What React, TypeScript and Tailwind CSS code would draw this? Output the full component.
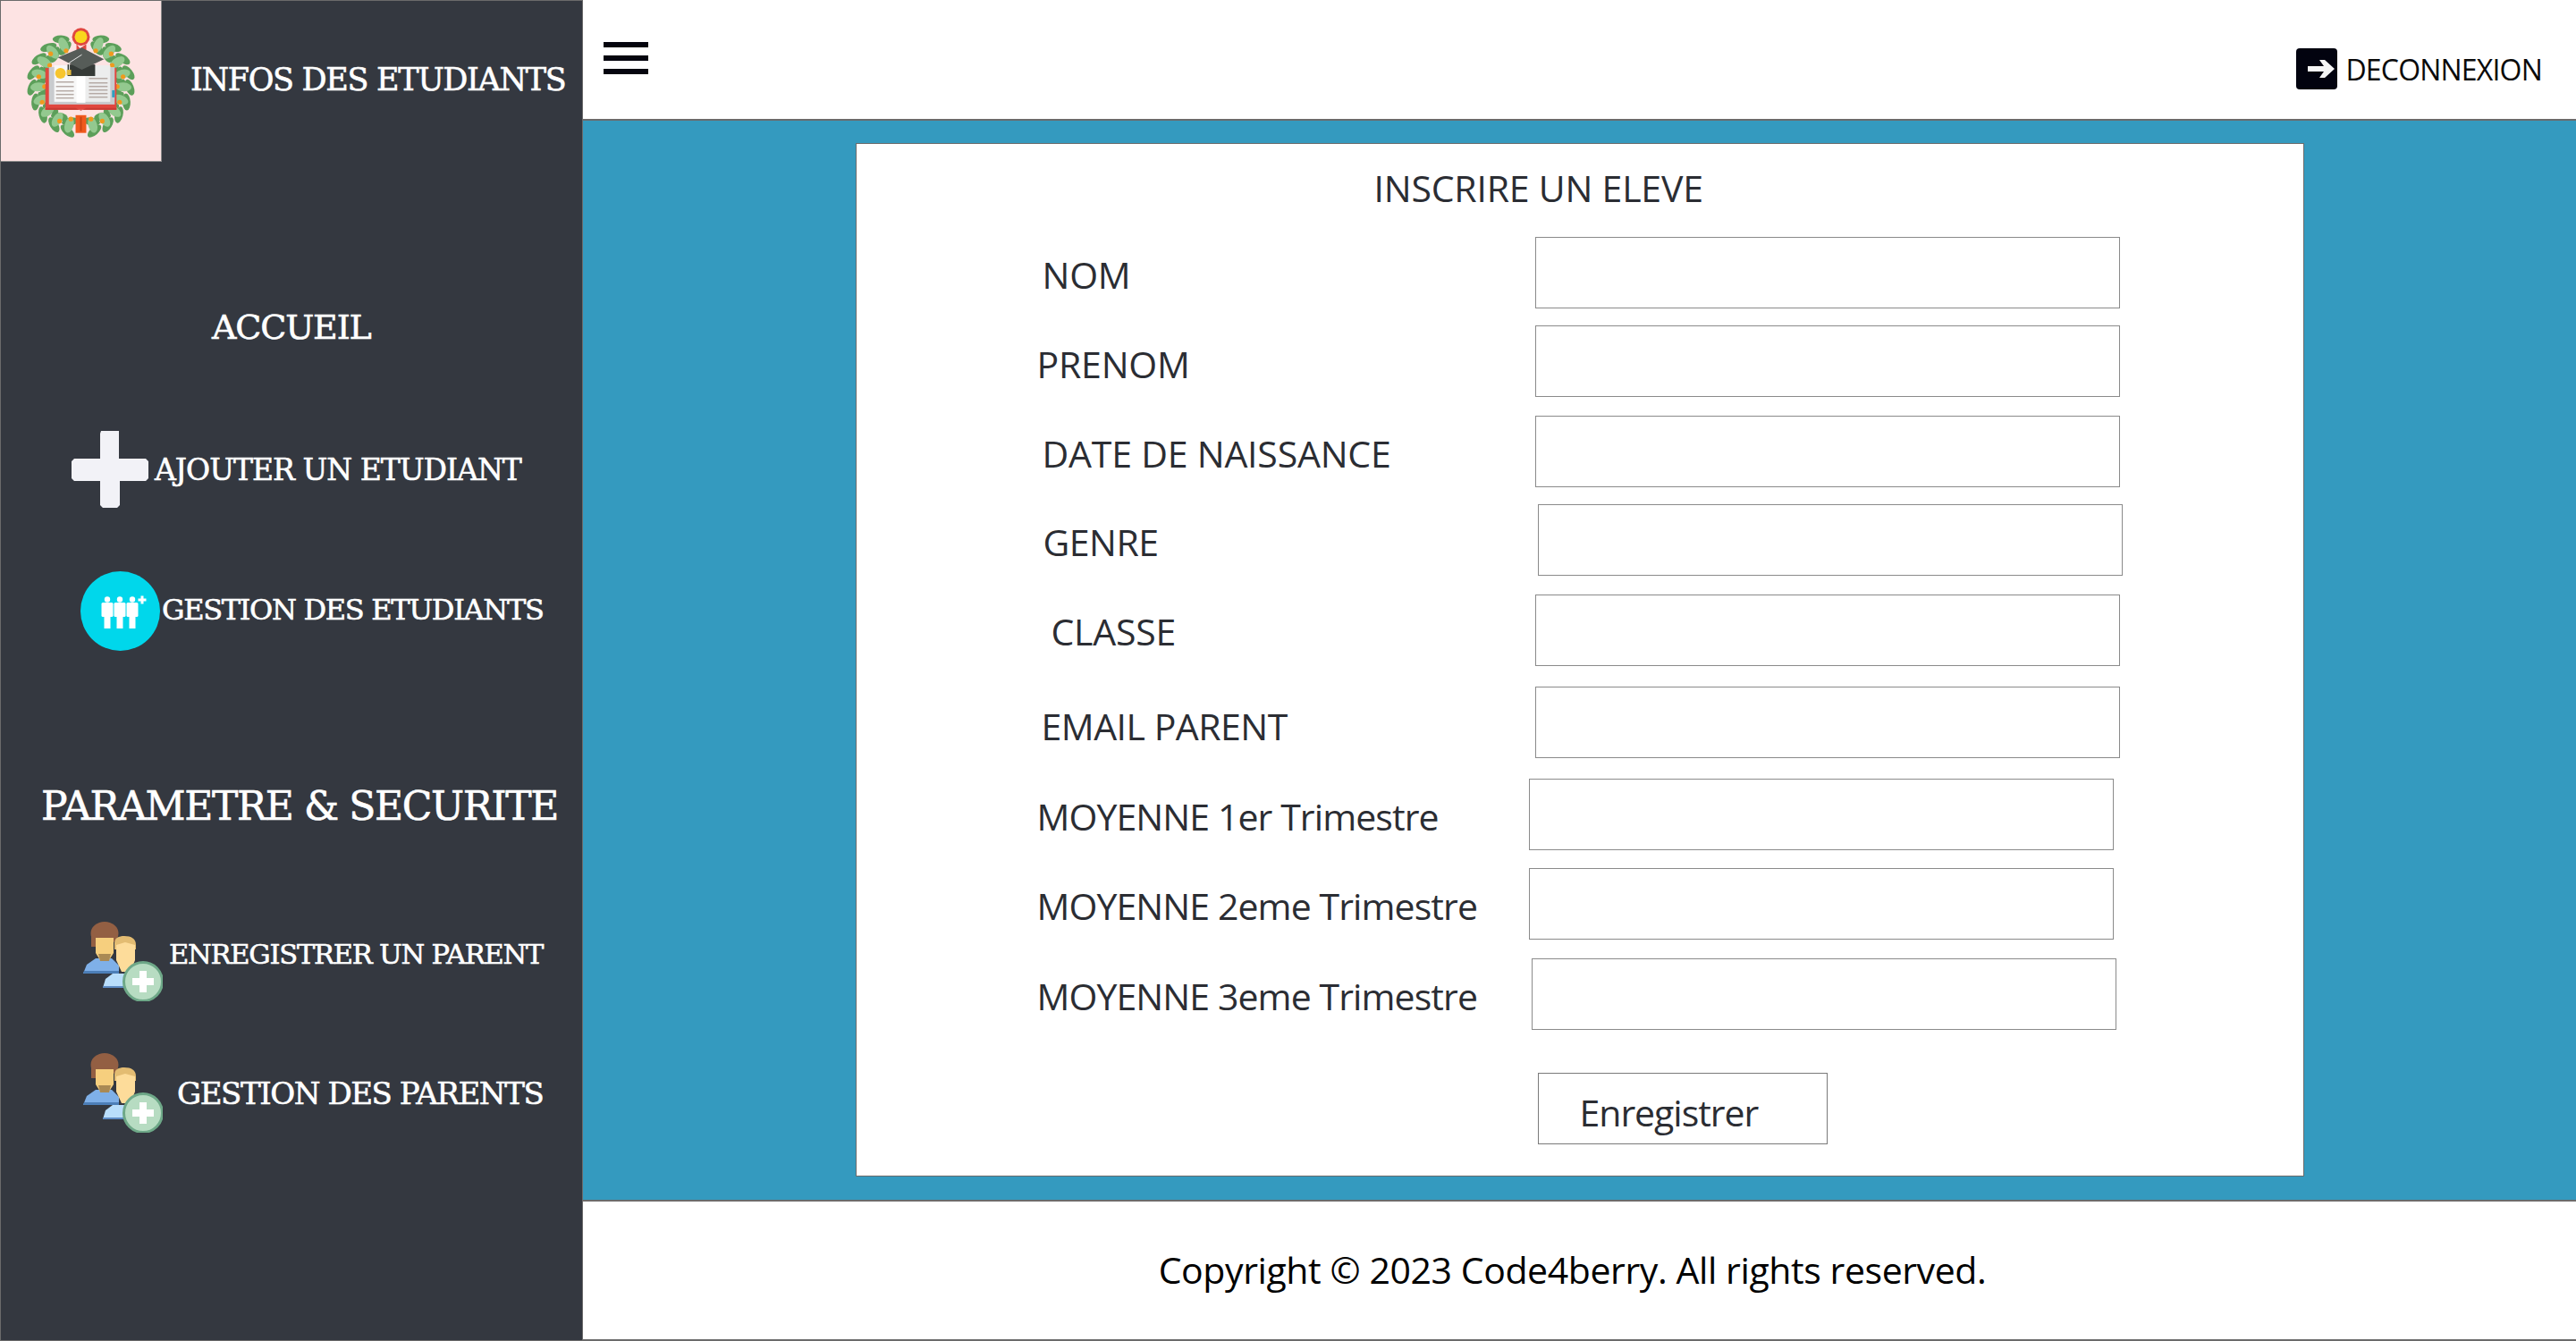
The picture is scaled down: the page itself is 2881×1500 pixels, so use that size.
const slab = "font-['DejaVu_Serif',serif] text-white whitespace-nowrap [-webkit-text-stroke:0.6px_#ffffff]"
const body = "font-['Open_Sans','Noto_Sans',sans-serif] whitespace-nowrap"

const fields = [
  { label: 'NOM', row: 'mt-0', left: 'pl-[208px]', labelW: 'w-[551px]', labelText: 'pt-[3px] tracking-[-0.005em]' },
  { label: 'PRENOM', row: 'mt-[19px]', left: 'pl-[202px]', labelW: 'w-[557px]', labelText: 'pt-[5px] tracking-[-0.005em]' },
  { label: 'DATE DE NAISSANCE', row: 'mt-[21px]', left: 'pl-[208px]', labelW: 'w-[551px]', labelText: 'pt-[4px] tracking-[-0.005em]' },
  { label: 'GENRE', row: 'mt-[19px]', left: 'pl-[209px]', labelW: 'w-[553px]', labelText: 'pt-[4px] tracking-[-0.012em]' },
  { label: 'CLASSE', row: 'mt-[21px]', left: 'pl-[218px]', labelW: 'w-[541px]', labelText: 'pt-[2px] tracking-[-0.005em]' },
  { label: 'EMAIL PARENT', row: 'mt-[23px]', left: 'pl-[207px]', labelW: 'w-[552px]', labelText: 'pt-[7px] tracking-[-0.012em]' },
  { label: 'MOYENNE 1er Trimestre', row: 'mt-[23px]', left: 'pl-[202px]', labelW: 'w-[550px]', labelText: 'pt-[4px] tracking-[-0.022em]' },
  { label: 'MOYENNE 2eme Trimestre', row: 'mt-[20px]', left: 'pl-[202px]', labelW: 'w-[550px]', labelText: 'pt-[4px] tracking-[-0.022em]' },
  { label: 'MOYENNE 3eme Trimestre', row: 'mt-[21px]', left: 'pl-[202px]', labelW: 'w-[553px]', labelText: 'pt-[4px] tracking-[-0.022em]' },
]

function Logo() {
  const dark: { x: number; y: number; r: number }[] = []
  const light: { x: number; y: number; r: number }[] = []
  const berries: { x: number; y: number }[] = []
  for (const side of [-1, 1]) {
    for (let i = 0; i < 9; i++) {
      const deg = 24 + i * 17.5
      const a = (deg * Math.PI) / 180
      const x = 90 + side * Math.sin(a) * 48
      const y = 93 - Math.cos(a) * 48
      const tilt = side * deg
      // outer and inner leaf of each cluster, the pale one sits on the stem
      dark.push({ x: x + side * 7 * Math.sin(a), y: y - 7 * Math.cos(a), r: tilt + side * 65 })
      dark.push({ x: x - side * 4 * Math.sin(a), y: y + 4 * Math.cos(a), r: tilt - side * 65 })
      light.push({ x, y, r: tilt })
      if (i % 2 === 0) berries.push({ x: x - side * 7 * Math.sin(a), y: y + 7 * Math.cos(a) })
      else berries.push({ x: x + side * 3 * Math.cos(a), y: y + 3 * Math.sin(a) })
    }
  }
  return (
    <svg width="180" height="180" viewBox="0 0 180 180">
      {dark.map((l, i) => (
        <ellipse key={i} cx={l.x} cy={l.y} rx="4.5" ry="9.5" fill="#5c9f5a" transform={`rotate(${l.r} ${l.x} ${l.y})`} />
      ))}
      {light.map((l, i) => (
        <ellipse key={i} cx={l.x} cy={l.y} rx="5" ry="9" fill="#93c98f" transform={`rotate(${l.r} ${l.x} ${l.y})`} />
      ))}
      {berries.map((b, i) => (
        <circle key={i} cx={b.x} cy={b.y} r="2.6" fill="#ef9a1e" />
      ))}
      <rect x="50" y="75" width="80" height="47" fill="#e0473f" />
      <rect x="54" y="74" width="74" height="42" fill="#c9cbce" />
      <rect x="60" y="72" width="30" height="41" fill="#f7f7f7" />
      <rect x="90" y="72" width="33" height="41" fill="#eceded" />
      <rect x="85" y="72" width="10" height="42" fill="#ffffff" />
      <path d="M50 120h34l6 3 6-3h34v2H50z" fill="#c93a33" />
      <rect x="125" y="100" width="3" height="8" fill="#2e9fc0" />
      <circle cx="67" cy="81" r="6" fill="#f7c52d" />
      {[90, 95, 100, 104, 108].map(y => (
        <rect key={y} x="62" y={y} width="20" height="1.5" fill="#b5aaa5" />
      ))}
      {[86, 91, 95, 99, 103, 107].map(y => (
        <rect key={y} x="99" y={y} width="21" height="1.5" fill="#b5aaa5" />
      ))}
      <path d="M85 48l4 5 7-5v14l-5 5-6-5z" fill="#e0473f" />
      <circle cx="90" cy="40" r="10" fill="#e0473f" />
      <circle cx="90" cy="40" r="7" fill="#f9d71c" />
      <path d="M75 71v13h31V71z" fill="#353a37" />
      <path d="M64 63l27-11 25 13-25 12z" fill="#565c58" />
      <path d="M91 60L77 69v9" stroke="#e8e8e8" strokeWidth="1" fill="none" />
      <rect x="74" y="77" width="5" height="6" fill="#e2b93b" />
      <rect x="84" y="128" width="12" height="20" fill="#f0591c" />
      <rect x="89" y="130" width="2" height="16" fill="#c94412" />
    </svg>
  )
}

function PeopleIcon() {
  return (
    <svg width="89" height="89" viewBox="0 0 89 89" className="shrink-0">
      <circle cx="44.5" cy="44.5" r="44.5" fill="#00d7eb" />
      {[30, 44, 58].map(x => (
        <g key={x} fill="#ffffff">
          <circle cx={x} cy="31.5" r="3.2" />
          <rect x={x - 6.5} y="35" width="13" height="16" rx="1.5" />
          <rect x={x - 3.5} y="42" width="7" height="22" />
        </g>
      ))}
      <path d="M67.5 27.5h3v3h3v3h-3v3h-3v-3h-3v-3h3z" fill="#ffffff" />
    </svg>
  )
}

function ParentIcon() {
  return (
    <svg width="89" height="89" viewBox="0 0 89 89" className="shrink-0">
      <path d="M0 58l4-10 10-7h18l8 8v9z" fill="#7fb0e8" />
      <path d="M0 58h40v-3H1z" fill="#4d7fb8" />
      <ellipse cx="24" cy="13" rx="15.5" ry="13" fill="#935f43" />
      <rect x="9" y="12" width="6" height="16" fill="#935f43" />
      <path d="M14 18h20v17l-5 8H19l-5-8z" fill="#f6cf7e" />
      <path d="M17 36h14l-2 8H19z" fill="#a98954" />
      <path d="M22 74l3-10 8-6h18v16z" fill="#b9defb" />
      <path d="M22 74h30v-2H22z" fill="#5e8cc4" />
      <path d="M35 24c0-6 5-8 11-8 8 0 13 3 13 10v5H35z" fill="#e3bc72" />
      <path d="M37 26l10-3 11 3v17l-5 13H43l-6-13z" fill="#fddc9a" />
      <circle cx="67" cy="67" r="21.5" fill="#b7dcc2" stroke="#6ea888" strokeWidth="3" />
      <path d="M63 55h8v8h8v8h-8v8h-8v-8h-8v-8h8z" fill="#ffffff" />
    </svg>
  )
}

export default function App() {
  return (
    <div className="flex h-[1500px] w-[2881px] overflow-hidden bg-white">
      <aside className="flex h-full w-[652px] shrink-0 flex-col border border-[#6b6b6b] bg-[#343840]">
        <div className="flex h-[180px] items-start">
          <div className="flex h-[180px] w-[180px] shrink-0 items-center justify-center border-r border-b border-[#8a8a8a] bg-[#fde3e3]">
            <Logo />
          </div>
          <span className={`${slab} ml-[32px] mt-[66px] text-[35px] leading-[44px] tracking-[-0.038em]`}>INFOS DES ETUDIANTS</span>
        </div>

        <div className={`${slab} ml-[236px] mt-[163px] text-[38px] leading-[44px] tracking-[-0.03em]`}>ACCUEIL</div>

        <div className="ml-[79px] mt-[94px] flex h-[86px] items-center gap-[7px]">
          <svg width="86" height="86" viewBox="0 0 86 86" className="shrink-0">
            <path d="M33 0h20v3h0v28h30l3 3v19l-3 3H54v27l-3 3H35l-3-3V56H3l-3-3V34l3-3h29V3z" fill="#f2f2f7" />
          </svg>
          <span className={`${slab} pt-[2px] text-[33px] leading-[40px] tracking-[-0.03em]`}>AJOUTER UN ETUDIANT</span>
        </div>

        <div className="ml-[89px] mt-[71px] flex h-[89px] items-center gap-[2px]">
          <PeopleIcon />
          <span className={`${slab} pb-[3px] text-[32px] leading-[40px] tracking-[-0.042em]`}>GESTION DES ETUDIANTS</span>
        </div>

        <div className={`${slab} ml-[45px] mt-[147px] text-[44px] leading-[54px] tracking-[-0.032em]`}>PARAMETRE &amp; SECURITE</div>

        <div className="ml-[92px] mt-[102px] flex h-[89px] items-start gap-[7px]">
          <ParentIcon />
          <span className={`${slab} mt-[18px] text-[30.5px] leading-[38px] tracking-[-0.04em]`}>ENREGISTRER UN PARENT</span>
        </div>

        <div className="ml-[92px] mt-[58px] flex h-[89px] items-start gap-[16px]">
          <ParentIcon />
          <span className={`${slab} mt-[25px] text-[34px] leading-[40px] tracking-[-0.042em]`}>GESTION DES PARENTS</span>
        </div>
      </aside>

      <div className="flex h-full min-w-0 flex-1 flex-col">
        <header className="flex h-[135px] shrink-0 items-start justify-between border-b-2 border-[#6b6b6b] bg-white">
          <button className="ml-[23px] mt-[47px] flex w-[50px] flex-col gap-[9px]">
            <span className="h-[6px] bg-[#05050f]" />
            <span className="h-[6px] bg-[#05050f]" />
            <span className="h-[6px] bg-[#05050f]" />
          </button>
          <div className="mr-[38px] mt-[53px] flex items-center gap-[9px]">
            <svg width="46" height="46" viewBox="0 0 46 46" className="shrink-0">
              <rect width="46" height="46" rx="4" fill="#02030f" />
              <path d="M13 20h18l-5-7h6l11 10-11 10h-6l5-7H13z" fill="#f5f5f5" />
            </svg>
            <span className={`${body} pt-[3px] text-[32px] leading-[44px] tracking-[-0.025em] text-[#0a0a0a]`}>DECONNEXION</span>
          </div>
        </header>

        <main className="flex h-[1207px] shrink-0 items-start justify-center bg-[#349abf] pt-[25px]">
          <form className="h-[1156px] w-[1620px] border border-[#6b6b6b] bg-white text-[#2b2d33]">
            <h1 className={`${body} h-[104px] pt-[22px] pl-[579px] text-[41px] font-normal leading-[54px] tracking-[-0.005em]`}>INSCRIRE UN ELEVE</h1>
            {fields.map(f => (
              <div key={f.label} className={`flex h-[80px] items-center ${f.row} ${f.left}`}>
                <label className={`${body} ${f.labelW} ${f.labelText} shrink-0 text-[41px] leading-[54px]`}>{f.label}</label>
                <input className="h-[80px] w-[654px] shrink-0 border border-[#8a8a8a] bg-white" />
              </div>
            ))}
            <button type="button" className={`${body} ml-[762px] mt-[48px] block h-[80px] w-[324px] border border-[#7a7a7a] bg-white pl-[46px] pt-[8px] text-left text-[41px] leading-[54px] tracking-[-0.025em]`}>Enregistrer</button>
          </form>
        </main>

        <footer className={`${body} flex flex-1 items-center justify-center border-y-2 border-[#6b6b6b] pr-[16px] text-[41px] tracking-[-0.01em] text-black`}>
          Copyright © 2023 Code4berry. All rights reserved.
        </footer>
      </div>
    </div>
  )
}
